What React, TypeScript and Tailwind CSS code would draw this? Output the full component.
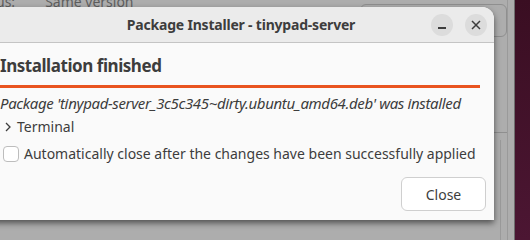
import React from "react";

export default function App() {
  const font = { fontFamily: '"Noto Sans", "Open Sans", sans-serif' };
  return (
    <div className="relative w-[530px] h-[240px] overflow-hidden bg-[#adadad]" style={font}>
      {/* desktop purple strip */}
      <div className="absolute right-0 top-0 h-full w-[16px] bg-gradient-to-b from-[#3a0e22] to-[#4c1633] border-l border-[#6e6e6e]" />
      {/* background window bits */}
      <div className="absolute left-[-4px] top-[-9px] text-[14px] text-[#5e5e5e] flex gap-[30px] whitespace-nowrap">
        <span>us:</span>
        <span>Same version</span>
      </div>
      <div className="absolute left-[360px] top-[4px] w-[147px] h-[33px] rounded-[6px] border border-[#8f8f8f]" />
      <div className="absolute left-[494px] top-[132px] w-[13px] h-px bg-[#8f8f8f]" />
      <div className="absolute left-[500px] top-[140px] w-px h-[100px] bg-[#9a9a9a]" />
      <div className="absolute left-[507px] top-0 w-px h-[240px] bg-[#9a9a9a]" />

      {/* dialog */}
      <div className="absolute left-[-12px] top-[7px] w-[506px] h-[213px] rounded-tr-[12px] bg-[#fafafa] shadow-[0_3px_6px_rgba(0,0,0,0.55)] flex flex-col overflow-hidden">
        <div className="relative h-[36px] shrink-0 bg-[#ebebeb] border-b border-[#c4c4c4] flex items-center justify-center">
          <span className="text-[14px] tracking-[-0.2px] font-bold text-[#3d3d3d] whitespace-nowrap">Package Installer - tinypad-server</span>
          <div className="absolute right-[41px] top-[7px] w-[22px] h-[22px] rounded-full bg-[#dcdcdc] flex items-center justify-center">
            <div className="w-[8px] h-[2px] bg-[#3d3d3d] mt-[6px]" />
          </div>
          <div className="absolute right-[7px] top-[7px] w-[22px] h-[22px] rounded-full bg-[#dcdcdc] flex items-center justify-center">
            <svg width="10" height="10" viewBox="0 0 10 10">
              <path d="M1 1 L9 9 M9 1 L1 9" stroke="#3d3d3d" strokeWidth="1.5" />
            </svg>
          </div>
        </div>
        <div className="flex flex-col pl-[12px] pr-[14px] text-[#3d3d3d] whitespace-nowrap">
          <div className="mt-[11px] text-[17px] tracking-[-0.45px] leading-[24px] font-bold">Installation finished</div>
          <div className="mt-[7px] h-[3px] bg-[#e95420]" />
          <div className="mt-[5px] text-[15px] tracking-[-0.35px] leading-[20px] italic">
            Package 'tinypad-server_3c5c345~dirty.ubuntu_amd64.deb' was installed
          </div>
          <div className="mt-[4px] flex items-center gap-[4px] text-[14px] leading-[20px]">
            <svg width="10" height="10" viewBox="0 0 10 10" className="ml-[3px]">
              <path d="M3 1 L7 5 L3 9" stroke="#3d3d3d" strokeWidth="1.3" fill="none" />
            </svg>
            <span>Terminal</span>
          </div>
          <div className="mt-[7px] flex items-center gap-[5px] text-[14px] leading-[20px]">
            <div className="ml-[3px] w-[16px] h-[16px] rounded-[4px] border border-[#bdbdbd] bg-white shrink-0" />
            <span>Automatically close after the changes have been successfully applied</span>
          </div>
          <div className="mt-[13px] flex justify-end">
            <div className="w-[85px] h-[34px] rounded-[6px] border border-[#cfcfcf] bg-white flex items-center justify-center text-[14px] mr-[-6px]">
              Close
            </div>
          </div>
        </div>
      </div>
    </div>
  );
}
